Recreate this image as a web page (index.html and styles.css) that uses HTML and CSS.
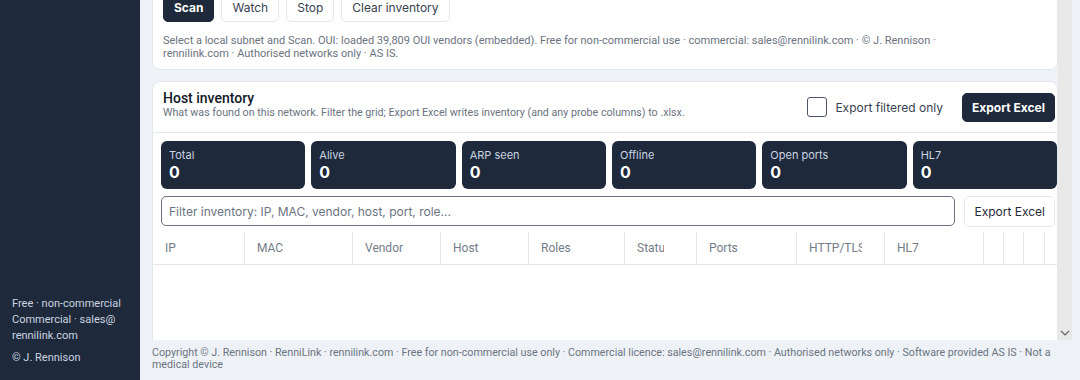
FILE: index.html
```html
<!DOCTYPE html>
<html lang="en">
<head>
  <meta charset="UTF-8">
  <title>RenniLink - Host inventory</title>
  <link rel="stylesheet" href="styles.css">
</head>
<body>

  <aside class="sidebar">
    <div class="side-note">
      <p>Free · non-commercial</p>
      <p>Commercial · sales@<wbr>rennilink.com</p>
    </div>
    <p class="side-copy">© J. Rennison</p>
  </aside>

  <main class="main">
    <div class="viewport">
      <div class="scroll">

        <section class="card controls">
          <div class="btn-row">
            <button class="btn btn-dark">Scan</button>
            <button class="btn">Watch</button>
            <button class="btn">Stop</button>
            <button class="btn">Clear inventory</button>
          </div>
          <p class="hint">Select a local subnet and Scan. OUI: loaded 39,809 OUI vendors (embedded). Free for non-commercial use · commercial: sales@rennilink.com · © J. Rennison · rennilink.com · Authorised networks only · AS IS.</p>
        </section>

        <section class="card inventory">
          <div class="inv-head">
            <div class="inv-title">
              <h2>Host inventory</h2>
              <p>What was found on this network. Filter the grid; Export Excel writes inventory (and any probe columns) to .xlsx.</p>
            </div>
            <label class="check">
              <input type="checkbox">
              <span>Export filtered only</span>
            </label>
            <button class="btn btn-dark btn-export">Export Excel</button>
          </div>

          <div class="inv-body">
            <div class="stats">
              <div class="stat"><span class="stat-label">Total</span><span class="stat-value">0</span></div>
              <div class="stat"><span class="stat-label">Alive</span><span class="stat-value">0</span></div>
              <div class="stat"><span class="stat-label">ARP seen</span><span class="stat-value">0</span></div>
              <div class="stat"><span class="stat-label">Offline</span><span class="stat-value">0</span></div>
              <div class="stat"><span class="stat-label">Open ports</span><span class="stat-value">0</span></div>
              <div class="stat"><span class="stat-label">HL7</span><span class="stat-value">0</span></div>
            </div>

            <div class="filter-row">
              <input type="text" class="filter" placeholder="Filter inventory: IP, MAC, vendor, host, port, role...">
              <button class="btn btn-plain">Export Excel</button>
            </div>

            <div class="grid">
              <div class="grid-head">
                <div class="col c-ip"><span>IP</span></div>
                <div class="col c-mac"><span>MAC</span></div>
                <div class="col c-vendor"><span>Vendor</span></div>
                <div class="col c-host"><span>Host</span></div>
                <div class="col c-roles"><span>Roles</span></div>
                <div class="col c-status"><span>Status</span></div>
                <div class="col c-ports"><span>Ports</span></div>
                <div class="col c-http"><span>HTTP/TLS</span></div>
                <div class="col c-hl7"><span>HL7</span></div>
                <div class="col c-x"></div>
                <div class="col c-x"></div>
                <div class="col c-x2"></div>
                <div class="col c-rest"></div>
              </div>
              <div class="grid-body"></div>
            </div>
          </div>
        </section>

      </div>
      <div class="scrollbar">
        <svg width="10" height="6" viewBox="0 0 10 6"><path d="M1 1 L5 5 L9 1" fill="none" stroke="#5f6368" stroke-width="1.2"/></svg>
      </div>
    </div>

    <footer class="foot">
      Copyright © J. Rennison · RenniLink · rennilink.com · Free for non-commercial use only · Commercial licence: sales@rennilink.com · Authorised networks only · Software provided AS IS · Not a medical device
    </footer>
  </main>

</body>
</html>
```

FILE: styles.css
```css
* { box-sizing: border-box; }
body {
  margin: 0;
  height: 380px;
  display: flex;
  overflow: hidden;
  background: #eef2f7;
  font-family: Roboto, "Liberation Sans", sans-serif;
  color: #111827;
}
p { margin: 0; }

/* sidebar */
.sidebar {
  width: 140px;
  flex: none;
  background: #1e293b;
  color: #cbd5e1;
  font-size: 11px;
  line-height: 16px;
  display: flex;
  flex-direction: column;
  justify-content: flex-end;
  padding: 0 12px 14px 12px;
}
.side-copy { margin-top: 6px; }

/* main column */
.main {
  flex: 1;
  display: flex;
  flex-direction: column;
  min-width: 0;
}
.viewport {
  height: 340px;
  display: flex;
  overflow: hidden;
  margin-right: 8px;
}
.scroll {
  flex: 1;
  padding-left: 12px;
  overflow: hidden;
}
.scrollbar {
  width: 14px;
  flex: none;
  background: #e8e8e8;
  display: flex;
  flex-direction: column;
  justify-content: flex-end;
  align-items: center;
  padding-bottom: 4px;
}

.card {
  background: #fff;
  border: 1px solid #e2e8f0;
  border-radius: 8px;
}

/* buttons */
.btn {
  height: 29px;
  padding: 0 10px;
  font-family: Inter, "Liberation Sans", sans-serif;
  font-size: 12px;
  color: #374151;
  background: #fff;
  border: 1px solid #e2e8f0;
  border-radius: 5px;
}
.btn-dark {
  background: #1e293b;
  border-color: #1e293b;
  color: #fff;
  font-weight: 700;
}
.btn-export { padding: 0 9px; }

/* controls card */
.controls {
  margin-top: -17px;
  padding: 9px 10px 9px 10px;
}
.btn-row {
  display: flex;
  gap: 7px;
}
.hint {
  max-width: 790px;
  margin-top: 12px;
  font-size: 11px;
  line-height: 13px;
  color: #6b7280;
}

/* inventory card */
.inventory {
  margin-top: 11px;
  overflow: hidden;
}
.inv-head {
  height: 51px;
  display: flex;
  align-items: center;
  padding: 0 2px 0 10px;
  border-bottom: 1px solid #e5e7eb;
}
.inv-title {
  flex: 1;
  padding-bottom: 5px;
}
.inv-title h2 {
  margin: 0;
  font-size: 14px;
  font-weight: 500;
  line-height: 17px;
  color: #111827;
}
.inv-title p {
  font-size: 10.7px;
  line-height: 12px;
  color: #6b7280;
}
.check {
  display: flex;
  align-items: center;
  gap: 8px;
  margin-right: 19px;
  font-family: Inter, "Liberation Sans", sans-serif;
  font-size: 12px;
  color: #374151;
}
.check input {
  appearance: none;
  margin: 0;
  width: 20px;
  height: 20px;
  border: 1.5px solid #4b5563;
  border-radius: 3px;
  background: #fff;
}

.inv-body {
  padding: 8px 0 0 8px;
}
.stats {
  display: grid;
  grid-template-columns: repeat(6, 1fr);
  gap: 6px;
}
.stat {
  height: 48px;
  background: #1e293b;
  border-radius: 6px;
  padding: 7px 8px;
  display: flex;
  flex-direction: column;
  font-family: Inter, "Liberation Sans", sans-serif;
}
.stat-label {
  font-size: 11px;
  line-height: 14px;
  color: #cbd5e1;
}
.stat-value {
  font-size: 16px;
  font-weight: 700;
  line-height: 21px;
  color: #fff;
}

.filter-row {
  display: flex;
  gap: 9px;
  margin-top: 7px;
  padding-right: 2px;
}
.filter {
  flex: 1;
  height: 30px;
  padding: 0 7px;
  border: 1px solid #6b7280;
  border-radius: 5px;
  font-family: Inter, "Liberation Sans", sans-serif;
  font-size: 12px;
  color: #111827;
}
.filter::placeholder { color: #6b7280; }
.btn-plain {
  height: 31px;
  padding: 0 9px;
  color: #1f2937;
}

/* grid */
.grid {
  margin: 5px 0 0 -8px;
}
.grid-head {
  display: flex;
  height: 33px;
  border-bottom: 1px solid #e5e7eb;
}
.col {
  flex: none;
  display: flex;
  align-items: center;
  padding-left: 12px;
  border-right: 1px solid #e5e7eb;
  font-size: 12px;
  color: #737b87;
  overflow: hidden;
  white-space: nowrap;
}
.col span { overflow: hidden; }
.c-ip { width: 92px; }
.c-mac { width: 108px; }
.c-vendor { width: 88px; }
.c-host { width: 88px; }
.c-roles { width: 96px; }
.c-status { width: 72px; }
.c-status span { width: 27px; }
.c-ports { width: 100px; }
.c-http { width: 88px; }
.c-http span { width: 53px; }
.c-hl7 { width: 99px; }
.c-x { width: 20px; padding: 0; }
.c-x2 { width: 21px; padding: 0; }
.c-rest { flex: 1; border-right: none; padding: 0; }
.grid-body { height: 80px; }

/* footer */
.foot {
  padding: 7px 20px 0 12px;
  font-size: 10.7px;
  line-height: 12px;
  color: #6b7280;
}
```
